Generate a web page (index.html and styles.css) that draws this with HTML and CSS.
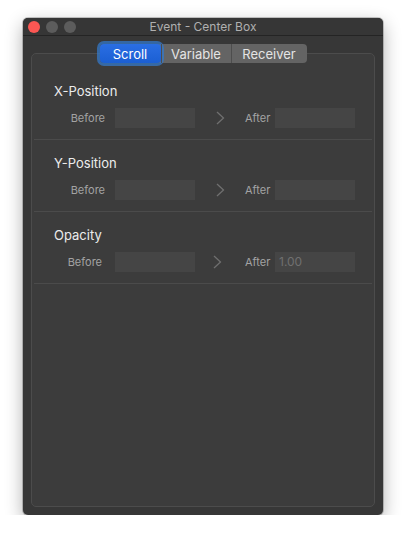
FILE: index.html
```html
<!DOCTYPE html>
<html lang="en">
<head>
    <meta charset="UTF-8">
    <meta name="viewport" content="width=device-width, initial-scale=1.0">
    <title>Event - Center Box</title>
    <link rel="stylesheet" href="styles.css">
</head>

<body>
    <div class="window">
        <!-- titulek okna -->
        <div class="titlebar">
            <div class="lights">
                <span class="light red"></span>
                <span class="light"></span>
                <span class="light"></span>
            </div>
            <span class="title">Event - Center Box</span>
        </div>

        <div class="content">
            <!-- prepinac -->
            <div class="tabs">
                <span class="tab active">Scroll</span>
                <span class="tab">Variable</span>
                <span class="tab">Receiver</span>
            </div>

            <div class="box">
                <div class="section">
                    <h4>X-Position</h4>
                    <div class="row">
                        <span class="label first">Before</span>
                        <div class="field"></div>
                        <span class="arrow">
                            <svg width="9" height="14" viewBox="0 0 9 14"><path d="M1 1 L7.5 7 L1 13" fill="none" stroke="#6f6f6f" stroke-width="1.3"/></svg>
                        </span>
                        <span class="label second">After</span>
                        <div class="field"></div>
                    </div>
                </div>

                <div class="section">
                    <h4>Y-Position</h4>
                    <div class="row">
                        <span class="label first">Before</span>
                        <div class="field"></div>
                        <span class="arrow">
                            <svg width="9" height="14" viewBox="0 0 9 14"><path d="M1 1 L7.5 7 L1 13" fill="none" stroke="#6f6f6f" stroke-width="1.3"/></svg>
                        </span>
                        <span class="label second">After</span>
                        <div class="field"></div>
                    </div>
                </div>

                <div class="section">
                    <h4>Opacity</h4>
                    <div class="row alt">
                        <span class="label first">Before</span>
                        <div class="field"></div>
                        <span class="arrow">
                            <svg width="9" height="14" viewBox="0 0 9 14"><path d="M1 1 L7.5 7 L1 13" fill="none" stroke="#6f6f6f" stroke-width="1.3"/></svg>
                        </span>
                        <span class="label second">After</span>
                        <div class="field">1.00</div>
                    </div>
                </div>
            </div>
        </div>
    </div>
</body>
</html>
```

FILE: styles.css
```css
/* Stylování */
body {
    margin: 0;
    padding: 0;
    background-color: #fff;
    font-family: Inter, "Noto Sans", sans-serif;
}

.window {
    width: 360px;
    height: 497px;
    margin: 18px 0 0 23px;
    background-color: #373737;
    border-radius: 5px;
    box-shadow: 0 6px 18px rgba(0, 0, 0, 0.32), 0 0 0 1px rgba(0, 0, 0, 0.2);
    display: flex;
    flex-direction: column;
    overflow: hidden;
}

.titlebar {
    height: 17px;
    display: flex;
    align-items: center;
    justify-content: center;
    position: relative;
    background-color: #363636;
    border-bottom: 1px solid #242424;
}

.lights {
    position: absolute;
    left: 5px;
    top: 3px;
    display: flex;
    gap: 6px;
}

.light {
    width: 12px;
    height: 12px;
    border-radius: 50%;
    background-color: #5c5c5c;
}

.light.red {
    background-color: #fc5753;
}

.title {
    font-size: 12px;
    color: #b0b0b0;
}

.content {
    flex: 1;
    display: flex;
    flex-direction: column;
    padding: 8px;
}

.tabs {
    align-self: center;
    display: flex;
    height: 19px;
    position: relative;
    z-index: 1;
    background-color: #646464;
    border-radius: 4px;
}

.tab {
    display: flex;
    align-items: center;
    justify-content: center;
    font-size: 13px;
    color: #e4e4e4;
    border-left: 1px solid #4d4d4d;
}

.tab:nth-child(2) {
    width: 69px;
}

.tab:nth-child(3) {
    width: 75px;
}

.tab.active {
    width: 61px;
    border-left: none;
    color: #fff;
    background: linear-gradient(#2a6ee3, #1b5fd3);
    border-radius: 4px;
    box-shadow: 0 0 0 3px rgba(52, 120, 200, 0.75);
}

.box {
    flex: 1;
    margin-top: -10px;
    padding-top: 13px;
    background-color: #3c3c3c;
    border: 1px solid #4c4c4c;
    border-radius: 5px;
}

.section {
    margin: 0 2px;
    padding: 15px 0 11px 20px;
    border-bottom: 1px solid #4b4b4b;
}

.section:first-child {
    padding-top: 16px;
}

h4 {
    margin: 0;
    font-size: 13px;
    line-height: 16px;
    font-weight: 400;
    color: #ececec;
}

.row {
    display: flex;
    align-items: center;
    margin-top: 9px;
    height: 20px;
}

.label {
    font-size: 11px;
    color: #a3a3a3;
    text-align: right;
}

.label.first {
    width: 51px;
    margin-right: 10px;
}

.label.second {
    width: 23px;
    margin-right: 7px;
}

.field {
    width: 80px;
    height: 20px;
    box-sizing: border-box;
    padding-left: 4px;
    background-color: #454545;
    font-size: 12px;
    line-height: 20px;
    color: #707070;
}

.arrow {
    width: 50px;
    display: flex;
    justify-content: center;
}

.row.alt .label.first {
    margin-right: 13px;
    width: 48px;
}

.row.alt .label.second {
    margin-right: 9px;
    width: 21px;
}

.row.alt .arrow {
    box-sizing: border-box;
    padding-right: 6px;
}
```
